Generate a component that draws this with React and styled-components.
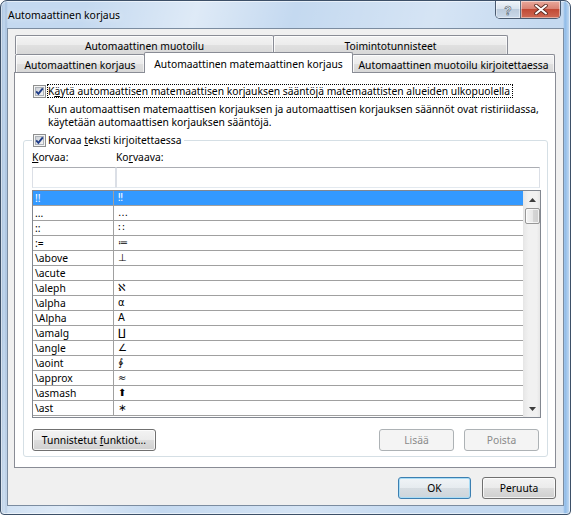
import React from 'react';
import styled, { createGlobalStyle } from 'styled-components';

const UI = `"Noto Sans", "Open Sans", "Liberation Sans", sans-serif`;

const Global = createGlobalStyle`
  html, body { margin: 0; padding: 0; background: #ffffff; }
  * { box-sizing: border-box; }
`;

const Frame = styled.div`
  width: 571px;
  height: 515px;
  border: 1px solid #3d5068;
  border-radius: 7px 7px 4px 4px;
  background:
    linear-gradient(105deg, rgba(255,255,255,0) 12%, rgba(255,255,255,0.45) 28%, rgba(255,255,255,0) 42%, rgba(255,255,255,0.3) 62%, rgba(255,255,255,0) 78%),
    linear-gradient(to right, #9fb8d6 0, #c3d8ee 3px, #a9c2df 5px, #c4d9f0 7px, #c4d9f0 calc(100% - 7px), #8fbbe8 calc(100% - 5px), #c8ddf2 100%);
  box-shadow: inset 0 0 0 1px rgba(255,255,255,0.55);
  padding: 0 6px 8px 6px;
  display: flex;
  flex-direction: column;
  font-family: ${UI};
  font-size: 10.3px;
  color: #000;
`;

const TitleBar = styled.div`
  height: 27px;
  flex-shrink: 0;
  display: flex;
  align-items: center;
`;

const Title = styled.div`
  flex: 1;
  padding-left: 1px;
  font-size: 10.4px;
  color: #000;
  text-shadow: 0 0 6px rgba(255,255,255,0.9);
`;

const Caption = styled.div`
  align-self: flex-start;
  display: flex;
  margin-right: 3px;
  border: 1px solid #4a5a70;
  border-top: none;
  border-radius: 0 0 5px 5px;
  overflow: hidden;
`;

const CapBtn = styled.div`
  width: ${p => p.$w}px;
  height: 17px;
  display: flex;
  align-items: center;
  justify-content: center;
  background: ${p => p.$close
    ? 'linear-gradient(#e9a99c 0%, #d98374 45%, #c24a36 50%, #cf6a55 100%)'
    : 'linear-gradient(#f0f4f9 0%, #d9e3ee 45%, #bccbdc 50%, #cad9ea 100%)'};
  border-left: ${p => p.$close ? '1px solid #5b6b80' : 'none'};
  box-shadow: inset 0 0 0 1px rgba(255,255,255,0.45);
`;

const Client = styled.div`
  flex: 1;
  border: 1px solid #7b8ca0;
  background: #f0f0f0;
  display: flex;
  flex-direction: column;
  padding: 6px 7px 6px 6px;
`;

const TabControl = styled.div`
  flex: 1;
  display: flex;
  flex-direction: column;
`;

const TabRow = styled.div`
  display: flex;
  flex-shrink: 0;
  padding-left: 1px;
`;

const Tab = styled.div`
  width: ${p => p.$w}px;
  height: ${p => p.$h}px;
  flex-shrink: 0;
  margin-left: ${p => p.$first ? 0 : -1}px;
  border: 1px solid #898c95;
  border-bottom: none;
  border-radius: 2px 2px 0 0;
  background: linear-gradient(#f3f3f3 0%, #ececec 50%, #e0e0e0 52%, #d8d8d8 100%);
  box-shadow: inset 1px 1px 0 rgba(255,255,255,0.8), inset -1px 0 0 rgba(255,255,255,0.6);
  display: flex;
  align-items: center;
  justify-content: center;
  padding-top: ${p => p.$pt || 0}px;
  white-space: nowrap;
`;

const SelectedTab = styled(Tab)`
  position: relative;
  z-index: 2;
  margin-top: -2px;
  margin-bottom: -1px;
  background: #ffffff;
  box-shadow: none;
`;

const Panel = styled.div`
  flex: 1;
  border: 1px solid #898c95;
  background: #ffffff;
  padding: 11px 7px 10px 8px;
  display: flex;
  flex-direction: column;
`;

const Header = styled.div`
  flex-shrink: 0;
  padding-left: 10px;
  display: flex;
  flex-direction: column;
`;

const CheckRow = styled.div`
  display: flex;
  flex-shrink: 0;
  align-items: center;
  gap: ${p => p.$gap || 1}px;
  height: 14px;
`;

const FocusLabel = styled.span`
  border: 1px dotted #000;
  padding: 0 2px 0 0;
  line-height: 12px;
  white-space: nowrap;
`;

const PlainLabel = styled.span`
  line-height: 13px;
  white-space: nowrap;
`;

const Desc = styled.div`
  flex-shrink: 0;
  margin: 5px 0 0 15px;
  line-height: 13px;
`;

const Group = styled.fieldset`
  flex-shrink: 0;
  margin: 4px 0 0 0;
  min-width: 0;
  border: 1px solid #d5dfe5;
  border-radius: 3px;
  padding: 4px 6px 5px 8px;
  display: flex;
  flex-direction: column;
`;

const Legend = styled.legend`
  padding: 0 3px 0 1px;
  margin: 0;
`;

const FieldGrid = styled.div`
  display: grid;
  flex-shrink: 0;
  grid-template-columns: 84px 424px;
  row-gap: 3px;
`;

const FieldLabel = styled.div`
  line-height: 13px;
`;

const Input = styled.div`
  height: 21px;
  border: 1px solid #abadb3;
  border-left-color: #dbdfe6;
  border-right-color: #dbdfe6;
  border-bottom-color: #e3e9ef;
  background: #ffffff;
`;

const List = styled.div`
  flex-shrink: 0;
  margin-top: 2px;
  height: 228px;
  border: 1px solid #828790;
  background: #ffffff;
  display: flex;
`;

const Rows = styled.div`
  flex: 1;
  display: flex;
  flex-direction: column;
`;

const Row = styled.div`
  display: grid;
  flex-shrink: 0;
  grid-template-columns: 81px 1fr;
  height: 15px;
  border-bottom: 1px solid #a0a0a0;
  background: ${p => p.$sel ? '#3399ff' : '#ffffff'};
  color: ${p => p.$sel ? '#ffffff' : '#000000'};
`;

const KeyCell = styled.div`
  border-right: 1px solid #a0a0a0;
  padding-left: 2px;
  line-height: 14px;
  white-space: nowrap;
  overflow: hidden;
`;

const ValCell = styled.div`
  padding-left: 4px;
  line-height: 14px;
  font-family: "DejaVu Sans", "Noto Sans", sans-serif;
  font-size: 10px;
  white-space: nowrap;
`;

const ScrollBar = styled.div`
  width: 17px;
  background: linear-gradient(to right, #e8e8e8, #f1f1f1 30%, #f1f1f1 80%, #e6e6e6);
  border-left: 1px solid #e6e6e6;
  display: flex;
  flex-direction: column;
  align-items: center;
`;

const ArrowBox = styled.div`
  height: 17px;
  flex-shrink: 0;
  width: 100%;
  display: flex;
  align-items: center;
  justify-content: center;
`;

const Thumb = styled.div`
  width: 15px;
  height: 16px;
  flex-shrink: 0;
  border: 1px solid #979797;
  border-radius: 2px;
  background: linear-gradient(to right, #f4f4f4, #e8e8e8 50%, #d6d6d6 51%, #cfcfcf);
  box-shadow: inset 0 0 0 1px rgba(255,255,255,0.7);
`;

const Track = styled.div`
  flex: 1;
`;

const ButtonRow = styled.div`
  display: flex;
  flex-shrink: 0;
  gap: ${p => p.$gap || 10}px;
  margin-top: ${p => p.$mt || 0}px;
  padding-right: ${p => p.$pr || 0}px;
  justify-content: flex-end;
`;

const Spacer = styled.div`
  flex: 1;
`;

const Btn = styled.button`
  font: inherit;
  font-family: ${UI};
  font-size: 10.3px;
  width: ${p => p.$w}px;
  height: 22px;
  padding: 0;
  border-radius: 3px;
  color: ${p => p.disabled ? '#8a8a8a' : '#000'};
  border: 1px solid ${p => p.disabled ? '#adb2b5' : p.$primary ? '#3c7fb1' : '#707070'};
  background: ${p => p.disabled
    ? '#f4f4f4'
    : p.$primary
      ? 'linear-gradient(#f0f4f7 0%, #e6ebef 50%, #d7dde2 51%, #cdd5db 100%)'
      : 'linear-gradient(#f3f3f3 0%, #ebebeb 50%, #dddddd 51%, #cfcfcf 100%)'};
  box-shadow: ${p => p.$primary
    ? 'inset 0 0 0 1px #a8dcf6'
    : p.disabled ? 'none' : 'inset 0 0 0 1px rgba(255,255,255,0.75)'};
`;

const Check = () => (
  <svg width="13" height="13" viewBox="0 0 13 13">
    <defs>
      <linearGradient id="cbg" x1="0" y1="0" x2="1" y2="1">
        <stop offset="0" stopColor="#cbcfd5" />
        <stop offset="1" stopColor="#f6f6f6" />
      </linearGradient>
    </defs>
    <rect x="0.5" y="0.5" width="12" height="12" fill="#f4f4f4" stroke="#8e8f8f" />
    <rect x="2.5" y="2.5" width="8" height="8" fill="url(#cbg)" stroke="#aeb3b9" />
    <path d="M3.2 6.4 L5.4 8.8 L9.8 3.4" fill="none" stroke="#1f3c88" strokeWidth="1.9" />
  </svg>
);

const UpArrow = () => (
  <svg width="7" height="4" viewBox="0 0 7 4"><path d="M0 4 L3.5 0 L7 4 Z" fill="#3d3d3d" /></svg>
);
const DownArrow = () => (
  <svg width="7" height="4" viewBox="0 0 7 4"><path d="M0 0 L7 0 L3.5 4 Z" fill="#3d3d3d" /></svg>
);

const rows = [
  ['!!', '‼'],
  ['...', '…'],
  ['::', '∷'],
  [':=', '≔'],
  ['\\above', '⊥'],
  ['\\acute', ''],
  ['\\aleph', 'ℵ'],
  ['\\alpha', 'α'],
  ['\\Alpha', 'Α'],
  ['\\amalg', '∐'],
  ['\\angle', '∠'],
  ['\\aoint', '∳'],
  ['\\approx', '≈'],
  ['\\asmash', '⬆'],
  ['\\ast', '∗'],
];

export default function App() {
  return (
    <>
      <Global />
      <Frame>
        <TitleBar>
          <Title>Automaattinen korjaus</Title>
          <Caption>
            <CapBtn $w={24}>
              <svg width="10" height="12" viewBox="0 0 10 12">
                <text x="5" y="10.5" textAnchor="middle" fontFamily="Liberation Sans, sans-serif" fontWeight="bold" fontSize="12" fill="#fff" stroke="#4b5a6c" strokeWidth="0.6">?</text>
              </svg>
            </CapBtn>
            <CapBtn $w={40} $close>
              <svg width="14" height="11" viewBox="0 0 14 11">
                <path d="M2 1.5 L12 9.5 M12 1.5 L2 9.5" stroke="#5a2a22" strokeWidth="3.6" strokeLinecap="round" />
                <path d="M2 1.5 L12 9.5 M12 1.5 L2 9.5" stroke="#ffffff" strokeWidth="2" strokeLinecap="round" />
              </svg>
            </CapBtn>
          </Caption>
        </TitleBar>
        <Client>
          <TabControl>
            <TabRow>
              <Tab $first $w={259} $h={19} $pt={2}>Automaattinen muotoilu</Tab>
              <Tab $w={235} $h={19} $pt={2}>Toimintotunnisteet</Tab>
            </TabRow>
            <TabRow>
              <Tab $first $w={130} $h={18} $pt={3}>Automaattinen korjaus</Tab>
              <SelectedTab $w={209} $h={21} $pt={1}>Automaattinen matemaattinen korjaus</SelectedTab>
              <Tab $w={203} $h={18} $pt={3}>Automaattinen muotoilu kirjoitettaessa</Tab>
            </TabRow>
            <Panel>
              <Header>
                <CheckRow>
                  <Check />
                  <FocusLabel>K<u>ä</u>ytä automaattisen matemaattisen korjauksen sääntöjä matemaattisten alueiden ulkopuolella</FocusLabel>
                </CheckRow>
                <Desc>
                  Kun automaattisen matemaattisen korjauksen ja automaattisen korjauksen säännöt ovat ristiriidassa,<br />
                  käytetään automaattisen korjauksen sääntöjä.
                </Desc>
              </Header>
              <Group>
                <Legend>
                  <CheckRow $gap={2}>
                    <Check />
                    <PlainLabel>Korvaa <u>t</u>eksti kirjoitettaessa</PlainLabel>
                  </CheckRow>
                </Legend>
                <FieldGrid>
                  <FieldLabel><u>K</u>orvaa:</FieldLabel>
                  <FieldLabel>Ko<u>r</u>vaava:</FieldLabel>
                  <Input />
                  <Input />
                </FieldGrid>
                <List>
                  <Rows>
                    {rows.map(([k, v], i) => (
                      <Row key={k} $sel={i === 0}>
                        <KeyCell>{k}</KeyCell>
                        <ValCell>{v}</ValCell>
                      </Row>
                    ))}
                  </Rows>
                  <ScrollBar>
                    <ArrowBox><UpArrow /></ArrowBox>
                    <Thumb />
                    <Track />
                    <ArrowBox><DownArrow /></ArrowBox>
                  </ScrollBar>
                </List>
                <ButtonRow $mt={11} $pr={2}>
                  <Btn $w={124}>Tunnistetut <u>f</u>unktiot...</Btn>
                  <Spacer />
                  <Btn $w={75} disabled>Lisää</Btn>
                  <Btn $w={75} disabled>Poista</Btn>
                </ButtonRow>
              </Group>
            </Panel>
          </TabControl>
          <ButtonRow $mt={9} $gap={11} $pr={0}>
            <Btn $w={73} $primary>OK</Btn>
            <Btn $w={74}>Peruuta</Btn>
          </ButtonRow>
        </Client>
      </Frame>
    </>
  );
}
